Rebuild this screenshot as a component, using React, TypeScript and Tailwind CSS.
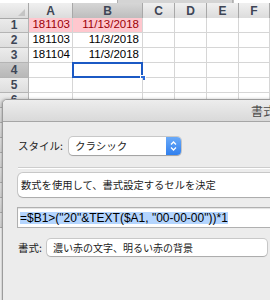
import React from 'react';

const cols = ['A', 'B', 'C', 'D', 'E', 'F'];

type Row = { n: number; a?: string; b?: string; hot?: boolean };

const rows: Row[] = [
    { n: 1, a: '181103', b: '11/13/2018', hot: true },
    { n: 2, a: '181103', b: '11/3/2018' },
    { n: 3, a: '181104', b: '11/3/2018' },
    { n: 4 },
    { n: 5 },
    { n: 6 },
    { n: 7 },
    { n: 8 },
    { n: 9 },
    { n: 10 },
    { n: 11 },
    { n: 12 },
    { n: 13 },
    { n: 14 },
];

const Sheet = () => (
    <div className="font-['Liberation_Sans',Arial,sans-serif]">
        {/* bottom edge of the toolbar above the grid */}
        <div className="h-[3px] flex">
            <div className="w-[117px] bg-white" />
            <div className="w-[116px] bg-[#d4d4d4] border-x border-[#b0b0b0]" />
            <div className="flex-1 bg-white border-l border-[#c0c0c0]" />
        </div>
        <div className="grid grid-cols-[29px_44px_70px_32px_32px_32px_1fr] auto-rows-[15px]">
            {/* header row */}
            <div className="h-[16px] relative bg-gradient-to-b from-[#f0f0f0] to-[#dcdcdc] border-r border-b border-[#a8a8a8]">
                <div className="absolute right-[3px] bottom-[2px] w-0 h-0 border-l-[7px] border-l-transparent border-b-[7px] border-b-[#c4c4c4]" />
            </div>
            {cols.map((c) => (
                <div
                    key={c}
                    className={
                        'h-[16px] flex items-center justify-center text-[12px] font-bold text-[#3e4656] border-r border-b border-[#a8a8a8] ' +
                        (c === 'B'
                            ? 'bg-gradient-to-b from-[#d6d6d6] to-[#bdbdbd]'
                            : 'bg-gradient-to-b from-[#f0f0f0] to-[#dcdcdc]')
                    }
                >
                    {c}
                </div>
            ))}
            {rows.map((r) => (
                <React.Fragment key={r.n}>
                    <div
                        className={
                            'flex items-center justify-center text-[12px] font-bold text-[#3e4656] border-r border-b border-[#b4b4b4] ' +
                            (r.n === 4
                                ? 'bg-gradient-to-b from-[#c9c9c9] to-[#b8b8b8]'
                                : 'bg-gradient-to-b from-[#ececec] to-[#dedede]')
                        }
                    >
                        {r.n}
                    </div>
                    <div
                        className={
                            'flex items-center justify-end pr-[2px] text-[11.5px] border-r border-b border-[#d6d6d6] ' +
                            (r.hot ? 'bg-[#ffc7ce] text-[#9c0006]' : 'bg-white text-black')
                        }
                    >
                        {r.a}
                    </div>
                    <div
                        className={
                            'relative flex items-center justify-end pr-[3px] text-[11.5px] border-r border-b border-[#d6d6d6] ' +
                            (r.hot ? 'bg-[#ffc7ce] text-[#9c0006]' : 'bg-white text-black')
                        }
                    >
                        {r.b}
                        {r.n === 4 && (
                            <>
                                <div className="absolute -left-px -top-px -right-px -bottom-px border-2 border-[#1b59c4]" />
                                <div className="absolute -right-[4px] -bottom-[4px] w-[6px] h-[6px] bg-[#2a6ad8] border border-white" />
                            </>
                        )}
                    </div>
                    {[0, 1, 2, 3].map((i) => (
                        <div key={i} className="bg-white border-r border-b border-[#d6d6d6]" />
                    ))}
                </React.Fragment>
            ))}
        </div>
    </div>
);

const Dialog = () => (
    <div className="absolute left-[2px] top-[99px] w-[300px] h-[215px] rounded-t-[5px] border border-[#9c9c9c] bg-[#ececec] shadow-[-1px_0_3px_rgba(0,0,0,0.25)] font-['Noto_Sans_CJK_JP','Liberation_Sans',sans-serif] overflow-hidden">
        <div className="h-[22px] flex items-center pl-[248px] whitespace-nowrap text-[12px] text-[#4a4a4a] bg-gradient-to-b from-[#ededed] to-[#d9d9d9] border-b border-[#a6a6a6]">
            書式ルールの編集
        </div>
        <div className="pl-[15px] pt-[15px]">
            <div className="flex items-center gap-[6px]">
                <span className="text-[10.5px] text-[#222]">スタイル:</span>
                <div className="w-[112px] h-[18px] flex rounded-[4px] bg-white shadow-[0_0_0_1px_rgba(0,0,0,0.15),0_1px_1px_rgba(0,0,0,0.2)] overflow-hidden">
                    <div className="flex-1 flex items-center pl-[6px] text-[10.5px] text-[#222]">クラシック</div>
                    <div className="w-[15px] flex items-center justify-center bg-gradient-to-b from-[#6aaaf8] to-[#2f7fee]">
                        <svg width="7" height="12" viewBox="0 0 7 12" fill="none" stroke="white" strokeWidth="1.3">
                            <path d="M1 4.5 L3.5 2 L6 4.5" />
                            <path d="M1 7.5 L3.5 10 L6 7.5" />
                        </svg>
                    </div>
                </div>
            </div>
            <div className="mt-[12px] h-px bg-[#cdcdcd] border-b border-white box-content" />
            <div className="mt-[4px] h-[24px] flex items-center pl-[3px] rounded-[5px] bg-white shadow-[0_0_0_1px_rgba(0,0,0,0.15),0_1px_1px_rgba(0,0,0,0.15)] text-[10.3px] text-[#222] whitespace-nowrap">
                数式を使用して、書式設定するセルを決定
            </div>
            <div className="mt-[10px] -ml-px h-[21px] flex items-center pl-[2px] bg-white border border-[#b0b0b0] shadow-[inset_0_1px_1px_rgba(0,0,0,0.12)] whitespace-nowrap">
                <span className="bg-[#b4d5fe] text-[12px] leading-[12px] text-black font-['Liberation_Sans',Arial,sans-serif]">
                    =$B1&gt;("20"&amp;TEXT($A1, "00-00-00"))*1
                </span>
            </div>
            <div className="mt-[11px] flex items-center gap-[5px]">
                <span className="text-[10.5px] text-[#222]">書式:</span>
                <div className="w-[220px] h-[17px] flex items-center pl-[6px] rounded-[4px] bg-white shadow-[0_0_0_1px_rgba(0,0,0,0.15),0_1px_1px_rgba(0,0,0,0.15)] text-[10px] text-[#222] whitespace-nowrap">
                    濃い赤の文字、明るい赤の背景
                </div>
            </div>
        </div>
    </div>
);

export default function App() {
    return (
        <div className="relative w-[270px] h-[300px] overflow-hidden bg-white">
            <Sheet />
            <Dialog />
        </div>
    );
}
